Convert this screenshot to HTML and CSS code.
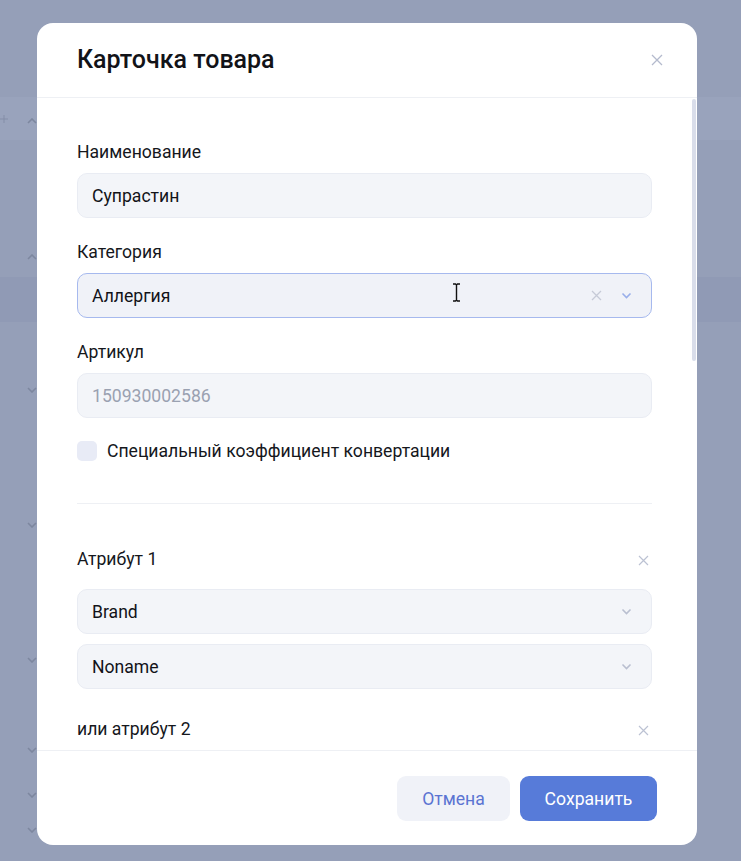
FILE: index.html
```html
<!DOCTYPE html>
<html lang="ru">
<head>
<meta charset="utf-8">
<title>Карточка товара</title>
<link rel="stylesheet" href="styles.css">
</head>
<body>
<div class="app">
  <div class="gap gap--97"></div>
  <div class="app-row app-row--light">
    <svg class="bg-plus" viewBox="0 0 12 12"><path d="M6 0 V12 M0 6 H12"/></svg>
    <svg class="bg-chev" viewBox="0 0 10 6"><path d="M1 5 L5 1 L9 5"/></svg>
  </div>
  <div class="gap gap--102"></div>
  <div class="app-row">
    <svg class="bg-chev" viewBox="0 0 10 6"><path d="M1 5 L5 1 L9 5"/></svg>
  </div>
  <div class="gap gap--5"></div>
  <div class="app-row app-row--dark"></div>
  <div class="gap gap--53"></div>
  <div class="app-row">
    <svg class="bg-chev" viewBox="0 0 10 6"><path d="M1 1 L5 5 L9 1"/></svg>
  </div>
  <div class="gap gap--105"></div>
  <div class="app-row">
    <svg class="bg-chev" viewBox="0 0 10 6"><path d="M1 1 L5 5 L9 1"/></svg>
  </div>
  <div class="gap gap--105"></div>
  <div class="app-row">
    <svg class="bg-chev" viewBox="0 0 10 6"><path d="M1 1 L5 5 L9 1"/></svg>
  </div>
  <div class="gap gap--60"></div>
  <div class="app-row">
    <svg class="bg-chev" viewBox="0 0 10 6"><path d="M1 1 L5 5 L9 1"/></svg>
  </div>
  <div class="gap gap--15"></div>
  <div class="app-row">
    <svg class="bg-chev" viewBox="0 0 10 6"><path d="M1 1 L5 5 L9 1"/></svg>
  </div>
  <div class="gap gap--5"></div>
  <div class="app-row">
    <svg class="bg-chev" viewBox="0 0 10 6"><path d="M1 1 L5 5 L9 1"/></svg>
  </div>
</div>

<div class="modal">
  <div class="modal-header">
    <h1 class="modal-title">Карточка товара</h1>
    <svg class="close-icon" viewBox="0 0 12 12"><path d="M1 1 L11 11 M11 1 L1 11"/></svg>
  </div>

  <div class="modal-body">
    <div class="scroll-thumb"></div>

    <div class="field">
      <div class="label">Наименование</div>
      <div class="input">Супрастин</div>
    </div>

    <div class="field">
      <div class="label">Категория</div>
      <div class="input input--focus">
        <span class="input-value">Аллергия</span>
        <svg class="x-icon" viewBox="0 0 11 11"><path d="M1 1 L10 10 M10 1 L1 10"/></svg>
        <svg class="chev-icon chev-icon--blue" viewBox="0 0 11 7"><path d="M1.5 1.5 L5.5 5.5 L9.5 1.5"/></svg>
        <svg class="cursor" viewBox="0 0 9 19"><path d="M1 1 H3.5 L4.5 2 L5.5 1 H8 M4.5 2 V17 M1 18 H3.5 L4.5 17 L5.5 18 H8"/></svg>
      </div>
    </div>

    <div class="field">
      <div class="label">Артикул</div>
      <div class="input input--muted">150930002586</div>
    </div>

    <label class="check-row">
      <span class="checkbox"></span>
      <span class="check-label">Специальный коэффициент конвертации</span>
    </label>

    <div class="divider"></div>

    <div class="attr">
      <div class="attr-head">
        <span class="label">Атрибут 1</span>
        <svg class="attr-x" viewBox="0 0 11 11"><path d="M1 1 L10 10 M10 1 L1 10"/></svg>
      </div>
      <div class="input">
        <span class="input-value">Brand</span>
        <svg class="chev-icon" viewBox="0 0 11 7"><path d="M1.5 1.5 L5.5 5.5 L9.5 1.5"/></svg>
      </div>
      <div class="input">
        <span class="input-value">Noname</span>
        <svg class="chev-icon" viewBox="0 0 11 7"><path d="M1.5 1.5 L5.5 5.5 L9.5 1.5"/></svg>
      </div>
    </div>

    <div class="attr">
      <div class="attr-head">
        <span class="label">или атрибут 2</span>
        <svg class="attr-x" viewBox="0 0 11 11"><path d="M1 1 L10 10 M10 1 L1 10"/></svg>
      </div>
    </div>
  </div>

  <div class="modal-footer">
    <button class="btn btn--secondary">Отмена</button>
    <button class="btn btn--primary">Сохранить</button>
  </div>
</div>
</body>
</html>
```

FILE: styles.css
```css
* { box-sizing: border-box; }

html, body {
  margin: 0;
  padding: 0;
}

body {
  width: 741px;
  height: 861px;
  overflow: hidden;
  background: #959fb8;
  font-family: Roboto, "Liberation Sans", Arial, sans-serif;
  position: relative;
}

/* background app (dimmed) */
.app {
  display: flex;
  flex-direction: column;
}
.gap { flex-shrink: 0; }
.gap--97 { height: 97px; }
.gap--102 { height: 102px; }
.gap--53 { height: 53px; }
.gap--105 { height: 105px; }
.gap--60 { height: 60px; }
.gap--15 { height: 15px; }
.gap--5 { height: 5px; }

.app-row {
  position: relative;
  flex-shrink: 0;
  height: 30px;
}
.app-row--light { height: 43px; background: #99a3bc; }
.app-row--dark { height: 45px; background: #909ab5; }

.bg-plus {
  position: absolute;
  left: 0;
  top: 18px;
  width: 8px;
  height: 8px;
  fill: none;
  stroke: #848da7;
  stroke-width: 1.4;
}
.bg-chev {
  position: absolute;
  left: 27px;
  top: 12px;
  width: 10px;
  height: 6px;
  fill: none;
  stroke: #7d879f;
  stroke-width: 1.6;
}
.app-row--light .bg-chev { top: 21px; }

/* modal */
.modal {
  position: absolute;
  left: 37px;
  top: 23px;
  width: 660px;
  height: 822px;
  background: #ffffff;
  border-radius: 16px;
  display: flex;
  flex-direction: column;
  overflow: hidden;
}

.modal-header {
  height: 75px;
  flex-shrink: 0;
  border-bottom: 1px solid #eef0f4;
  display: flex;
  align-items: center;
  justify-content: space-between;
  padding: 0 34px 0 40px;
}
.modal-title {
  margin: 0;
  font-size: 25px;
  line-height: 30px;
  font-weight: 500;
  color: #121318;
}
.close-icon {
  width: 12px;
  height: 12px;
  fill: none;
  stroke: #b4bacd;
  stroke-width: 1.3;
}

.modal-body {
  flex: 1;
  position: relative;
  overflow: hidden;
  padding: 44px 45px 0 40px;
}
.scroll-thumb {
  position: absolute;
  right: 1px;
  top: 1px;
  width: 4px;
  height: 262px;
  border-radius: 2px;
  background: #d9ddea;
}

.field + .field { margin-top: 24px; }

.label {
  font-size: 17.6px;
  line-height: 20px;
  color: #15171c;
  display: block;
}
.field .label { margin-bottom: 11px; }

.input {
  position: relative;
  height: 45px;
  border: 1px solid #e9ecf3;
  background: #f3f5f9;
  border-radius: 10px;
  padding: 0 19px 0 14px;
  display: flex;
  align-items: center;
  font-size: 17.6px;
  color: #121318;
}
.input--focus {
  border-color: #a6b9ee;
  background: #f0f2f8;
}
.input--muted { color: #9aa1b1; }
.input-value { flex: 1; }

.x-icon {
  width: 11px;
  height: 11px;
  fill: none;
  stroke: #c6cad7;
  stroke-width: 1.3;
  margin-right: 19px;
}
.chev-icon {
  width: 11px;
  height: 7px;
  fill: none;
  stroke: #b9bfd0;
  stroke-width: 1.6;
}
.chev-icon--blue { stroke: #98aeea; }

.cursor {
  position: absolute;
  left: 374px;
  top: 9px;
  width: 9px;
  height: 19px;
  fill: none;
  stroke: #111;
  stroke-width: 1.4;
}

.check-row {
  display: flex;
  align-items: center;
  gap: 10px;
  margin-top: 23px;
}
.checkbox {
  width: 20px;
  height: 20px;
  border-radius: 5px;
  background: #e8ebf6;
}
.check-label {
  font-size: 17.6px;
  line-height: 20px;
  color: #15171c;
}

.divider {
  height: 1px;
  background: #eef0f4;
  margin-top: 42px;
}

.attr { display: flex; flex-direction: column; gap: 10px; }
.divider + .attr { margin-top: 45px; }
.attr + .attr { margin-top: 30px; }
.attr-head {
  display: flex;
  align-items: center;
  justify-content: space-between;
  height: 20px;
  margin-bottom: 10px;
  padding-right: 3px;
}
.attr-x {
  width: 11px;
  height: 11px;
  fill: none;
  stroke: #bcc2d3;
  stroke-width: 1.2;
  margin-top: 3px;
}

.modal-footer {
  height: 95px;
  flex-shrink: 0;
  border-top: 1px solid #eef0f4;
  display: flex;
  justify-content: flex-end;
  align-items: flex-start;
  gap: 10px;
  padding: 25px 40px 0 40px;
}
.btn {
  height: 45px;
  border: none;
  border-radius: 9px;
  padding: 0 20px;
  font-family: Roboto, "Liberation Sans", Arial, sans-serif;
  font-size: 17.6px;
  cursor: pointer;
}
.btn--secondary {
  background: #f0f2f8;
  color: #5b74d2;
  width: 113px;
}
.btn--primary {
  background: #577bd9;
  color: #ffffff;
  width: 137px;
}
```
